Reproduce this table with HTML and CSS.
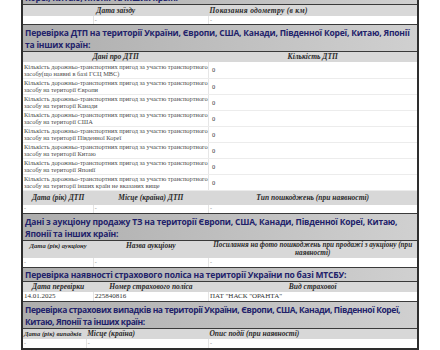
FILE: index.html
```html
<!DOCTYPE html>
<html lang="uk">
<head>
<meta charset="utf-8">
<link rel="stylesheet" href="styles.css">
</head>
<body>
<div class="doc">
  <div class="hdr h1">Кореї, Китаю, Японії та інших країн:</div>
  <table class="t3">
    <colgroup><col class="ca"><col class="cb"><col class="cc"></colgroup>
    <tr class="sub s11"><th colspan="2">Дата заїзду</th><th class="l wide">Показання одометру (в км)</th></tr>
    <tr class="data"><td></td><td>-</td><td>-</td></tr>
  </table>
  <div class="hdr">Перевірка ДТП на території України, Європи, США, Канади, Південної Кореї, Китаю, Японії<br>та інших країн:</div>
  <table class="t2">
    <colgroup><col class="cab"><col class="cc"></colgroup>
    <tr class="sub s10"><th>Дані про ДТП</th><th>Кількість ДТП</th></tr>
    <tr class="row"><td>Кількість дорожньо-транспортних пригод за участю транспортного<br>засобу(що наявні в базі ГСЦ МВС)</td><td class="n">0</td></tr>
    <tr class="row"><td>Кількість дорожньо-транспортних пригод за участю транспортного<br>засобу на території Європи</td><td class="n">0</td></tr>
    <tr class="row"><td>Кількість дорожньо-транспортних пригод за участю транспортного<br>засобу на території Канади</td><td class="n">0</td></tr>
    <tr class="row"><td>Кількість дорожньо-транспортних пригод за участю транспортного<br>засобу на території США</td><td class="n">0</td></tr>
    <tr class="row"><td>Кількість дорожньо-транспортних пригод за участю транспортного<br>засобу на території Південної Кореї</td><td class="n">0</td></tr>
    <tr class="row"><td>Кількість дорожньо-транспортних пригод за участю транспортного<br>засобу на території Китаю</td><td class="n">0</td></tr>
    <tr class="row"><td>Кількість дорожньо-транспортних пригод за участю транспортного<br>засобу на території Японії</td><td class="n">0</td></tr>
    <tr class="row"><td>Кількість дорожньо-транспортних пригод за участю транспортного<br>засобу на території інших країн не вказаних вище</td><td class="n">0</td></tr>
  </table>
  <table class="t3">
    <colgroup><col class="ca"><col class="cb"><col class="cc"></colgroup>
    <tr class="sub s14"><th>Дата (рік) ДТП</th><th>Місце (країна) ДТП</th><th>Тип пошкоджень (при наявності)</th></tr>
    <tr class="data"><td>-</td><td>-</td><td>-</td></tr>
  </table>
  <div class="hdr">Дані з аукціону продажу ТЗ на території Європи, США, Канади, Південної Кореї, Китаю,<br>Японії та інших країн:</div>
  <table class="t3">
    <colgroup><col class="ca"><col class="cb"><col class="cc"></colgroup>
    <tr class="sub s16"><th class="top sm">Дата (рік) аукціону</th><th class="top">Назва аукціону</th><th class="wrap">Посилання на фото пошкоджень при продажі з аукціону (при<br>наявності)</th></tr>
    <tr class="data d9"><td>-</td><td>-</td><td>-</td></tr>
  </table>
  <div class="hdr h1">Перевірка наявності страхового поліса на території України по базі МТСБУ:</div>
  <table class="t3">
    <colgroup><col class="ca"><col class="cb"><col class="cc"></colgroup>
    <tr class="sub s10"><th>Дата перевірки</th><th>Номер страхового поліса</th><th>Вид страхової</th></tr>
    <tr class="data d9 dark"><td>14.01.2025</td><td>225840816</td><td>ПАТ "НАСК "ОРАНТА"</td></tr>
  </table>
  <div class="hdr tight">Перевірка страхових випадків на території України, Європи, США, Канади, Південної Кореї,<br>Китаю, Японії та інших країн:</div>
  <table class="t3">
    <colgroup><col class="cd"><col class="ce"><col class="cc"></colgroup>
    <tr class="sub s10"><th class="l sm">Дата (рік) випадків</th><th class="l">Місце (країна)</th><th class="l">Опис події (при наявності)</th></tr>
    <tr class="data d9"><td>-</td><td>-</td><td>-</td></tr>
  </table>
</div>
</body>
</html>
```
FILE: styles.css
```css
* { box-sizing: border-box; margin: 0; padding: 0; }
html, body { background: #fff; }
body { width: 440px; height: 350px; overflow: hidden; }

.doc {
  margin: -10px 0 0 21px;
  width: 398px;
  border-left: 2px solid #2e2e2e;
  border-right: 2px solid #2e2e2e;
  border-bottom: 2px solid #2e2e2e;
}

.hdr {
  background: linear-gradient(90deg, #adadad 0%, #c0c0c0 55%, #d0d0d0 100%);
  border-top: 1px solid #3a3a3a;
  border-bottom: 1px solid #3a3a3a;
  color: #22226a;
  font-family: "Open Sans", sans-serif;
  font-weight: 700;
  font-size: 8.5px;
  letter-spacing: -0.2px;
  line-height: 12px;
  padding: 2px 0 0 2px;
  white-space: nowrap;
  overflow: hidden;
}
.hdr.h1 { line-height: 13px; padding-top: 0; }
.hdr.tight { letter-spacing: -0.4px; }

table { width: 100%; border-collapse: collapse; table-layout: fixed; }
.ca { width: 70px; }
.cb { width: 115px; }
.cab { width: 185px; }
.cc { width: 208px; }
.cd { width: 63px; }
.ce { width: 122px; }

.sub th {
  background: #d8d8d8;
  font-family: "Liberation Serif", serif;
  font-style: italic;
  font-weight: 700;
  font-size: 7.5px;
  line-height: 8px;
  color: #2a2a2a;
  text-align: center;
  padding: 0 1px;
  white-space: nowrap;
  overflow: hidden;
}
.sub th.l { text-align: left; padding-left: 1px; }
.sub th.top { vertical-align: top; padding-top: 1px; }
.sub th.sm { font-size: 6.6px; }
.sub th.wrap { font-size: 7.2px; }
.sub th.wide { letter-spacing: 0.3px; }
.s10 th { height: 10px; }
.s11 th { height: 11px; }
.s14 th { height: 14px; }
.s16 th { height: 17px; }

.data td {
  height: 8px;
  font-family: "Liberation Serif", serif;
  font-size: 6px;
  line-height: 7px;
  color: #8a8a8a;
  padding: 0 1px;
  border-right: 1px solid #e4e4e4;
  vertical-align: middle;
}
.data.d9 td { height: 9px; }
.data.dark td { font-size: 7px; color: #333; }
.data td:last-child { border-right: 0; }

.row td {
  height: 16px;
  font-family: "Liberation Serif", serif;
  font-size: 6.4px;
  line-height: 7px;
  color: #4a4a4a;
  padding: 0 1px;
  white-space: nowrap;
  border-bottom: 1px solid #ececec;
  border-right: 1px solid #e6e6e6;
  vertical-align: middle;
}
.row td.n { border-right: 0; padding-left: 3px; color: #333; }
```
